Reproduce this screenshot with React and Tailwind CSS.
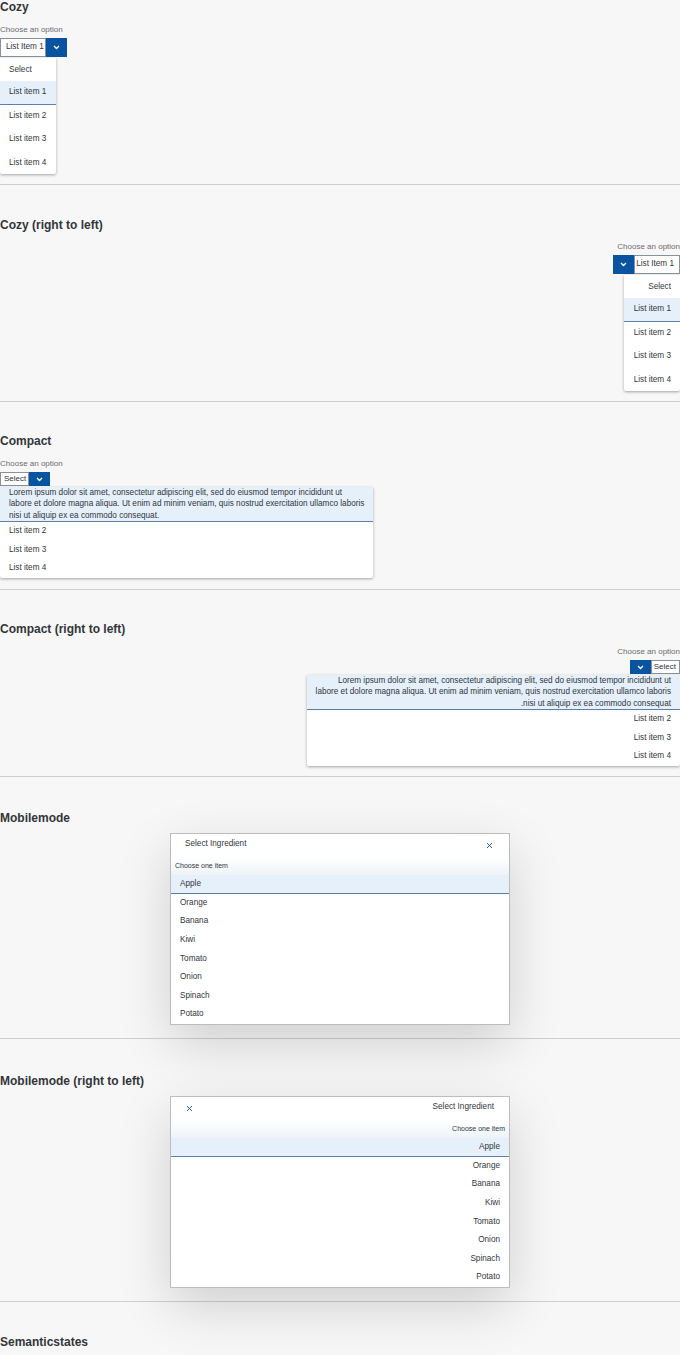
import { X } from 'lucide-react'

const FONT = { fontFamily: '"Liberation Sans", Arial, sans-serif' }
const LOREM = [
  'Lorem ipsum dolor sit amet, consectetur adipiscing elit, sed do eiusmod tempor incididunt ut',
  'labore et dolore magna aliqua. Ut enim ad minim veniam, quis nostrud exercitation ullamco laboris',
  'nisi ut aliquip ex ea commodo consequat.',
]
const FRUITS = ['Apple', 'Orange', 'Banana', 'Kiwi', 'Tomato', 'Onion', 'Spinach', 'Potato']

function Chevron() {
  return (
    <svg width="7" height="5" viewBox="0 0 7 5">
      <polyline points="1,1 3.5,3.5 6,1" fill="none" stroke="#fff" strokeWidth="1.3" />
    </svg>
  )
}

function Heading({ children }) {
  return <h3 className="text-[12px] leading-[15px] font-bold text-[#32363a]">{children}</h3>
}

function Label() {
  return <div className="mt-[10px] text-[8px] leading-[10px] text-[#6a6d70]">Choose an option</div>
}

// cozy select + open list
function CozySelect() {
  return (
    <div className="flex flex-col items-start">
      <Label />
      <div className="mt-[3px] flex h-[19px]">
        <div className="w-[46px] bg-white border border-[#89919a] flex items-center px-[5px] text-[8.2px] text-[#32363a] whitespace-nowrap">List Item 1</div>
        <div className="w-[21px] bg-[#0854a0] flex items-center justify-center"><Chevron /></div>
      </div>
      <div className="mt-px w-[56px] bg-white shadow-[0_1px_3px_rgba(0,0,0,0.35)] rounded-b-[2px]">
        {['Select', 'List item 1', 'List item 2', 'List item 3', 'List item 4'].map((t, i) => (
          <div key={t} className={`h-[23.3px] flex items-center px-[9px] text-[8.2px] text-[#32363a] whitespace-nowrap ${i === 1 ? 'bg-[#e5f0fa] border-b border-[#5b7fa8]' : ''}`}>{t}</div>
        ))}
      </div>
    </div>
  )
}

function CompactSelect() {
  return (
    <div className="flex flex-col items-start">
      <Label />
      <div className="mt-[3px] flex h-[14px]">
        <div className="w-[29px] bg-white border border-[#89919a] flex items-center px-[3px] text-[8px] text-[#32363a] whitespace-nowrap">Select</div>
        <div className="w-[21px] bg-[#0854a0] flex items-center justify-center"><Chevron /></div>
      </div>
      <div className="mt-px w-[373px] bg-white shadow-[0_1px_3px_rgba(0,0,0,0.35)] rounded-b-[2px] text-[8.2px] text-[#32363a]">
        <div className="bg-[#e5f0fa] border-b border-[#5b7fa8] px-[9px] leading-[11.3px] whitespace-nowrap">
          {LOREM[0]}<br />{LOREM[1]}<br />{LOREM[2]}
        </div>
        {['List item 2', 'List item 3', 'List item 4'].map(t => (
          <div key={t} className="h-[18.6px] flex items-center px-[9px]">{t}</div>
        ))}
      </div>
    </div>
  )
}

function MobileDialog() {
  return (
    <div className="mt-[7px] mx-auto w-[340px] bg-white border border-[#bcbcbc] shadow-[0_18px_50px_rgba(0,0,0,0.16)] text-[#32363a]">
      <div className="h-[23px] flex items-center justify-between pl-[14px] pr-[15px]">
        <span className="text-[8.2px] -mt-[2px]">Select Ingredient</span>
        <X size={9} strokeWidth={2.4} className="text-[#0854a0]" />
      </div>
      <div className="h-[18px] flex items-center px-[4px] text-[7px] bg-gradient-to-b from-white to-[#eef3f8]">Choose one item</div>
      {FRUITS.map((f, i) => (
        <div key={f} className={`h-[18.6px] flex items-center px-[9px] text-[8.2px] ${i === 0 ? 'bg-[#e5f0fa] border-b border-[#5b7fa8]' : ''}`}>{f}</div>
      ))}
    </div>
  )
}

function Section({ title, pad = 'pt-8', className = '', children }) {
  return (
    <section className={`border-b border-[#cfcfcf] ${pad} ${className}`}>
      <Heading>{title}</Heading>
      {children}
    </section>
  )
}

export default function App() {
  return (
    <div className="min-h-[1355px] bg-[#f7f7f7] overflow-hidden" style={FONT}>
      <Section title="Cozy" pad="pt-0" className="h-[185px]">
        <CozySelect />
      </Section>
      <Section title="Cozy (right to left)" pad="pt-[33px]" className="h-[217px]">
        <div dir="rtl" className="-mt-px"><CozySelect /></div>
      </Section>
      <Section title="Compact" className="h-[188px]">
        <CompactSelect />
      </Section>
      <Section title="Compact (right to left)" className="h-[187px]">
        <div dir="rtl"><CompactSelect /></div>
      </Section>
      <Section title="Mobilemode" pad="pt-[34px]" className="h-[262px]">
        <MobileDialog />
      </Section>
      <Section title="Mobilemode (right to left)" pad="pt-[35px]" className="h-[263px]">
        <div dir="rtl"><MobileDialog /></div>
      </Section>
      <section className="pt-[33px]">
        <Heading>Semanticstates</Heading>
      </section>
    </div>
  )
}
